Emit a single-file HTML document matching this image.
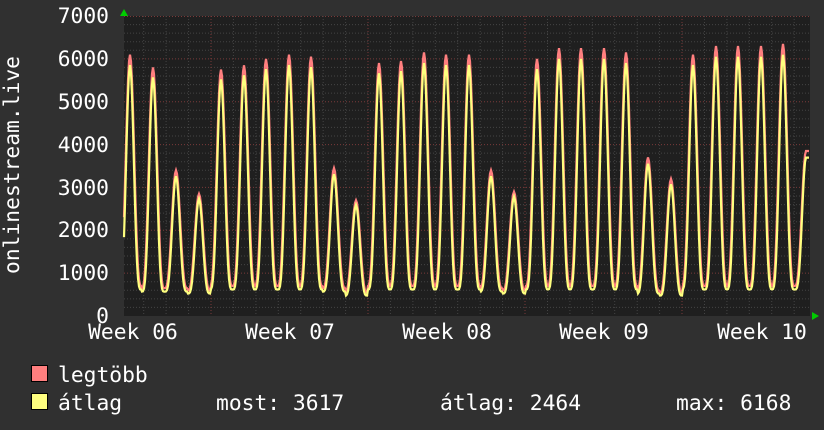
<!DOCTYPE html>
<html><head><meta charset="utf-8"><style>
html,body{margin:0;padding:0;background:#2f2f2f;}
svg{display:block}
text{font-family:"DejaVu Sans Mono","Liberation Mono",monospace;font-size:21.3px;fill:#fff}
</style></head><body>
<svg id="s" width="824" height="430" xmlns="http://www.w3.org/2000/svg">
<rect width="824" height="430" fill="#303030"/>
<rect x="124" y="16" width="686" height="300" fill="#1f1f1f"/>
<g id="grid"></g>
<path id="pmax" fill="none" stroke="#ff7f7f" stroke-width="2.2"/>
<path id="pavg" fill="none" stroke="#ffff7f" stroke-width="2.2"/>
<polygon points="120,16 128,16 124,9" fill="#00cc00"/>
<polygon points="812,312 812,320 819,316" fill="#00cc00"/>
<g text-anchor="end">
<text x="109" y="23">7000</text><text x="109" y="66">6000</text><text x="109" y="109">5000</text>
<text x="109" y="152">4000</text><text x="109" y="195">3000</text><text x="109" y="237">2000</text>
<text x="109" y="280">1000</text><text x="109" y="323">0</text>
</g>
<g text-anchor="middle">
<text x="133" y="339">Week 06</text><text x="290" y="339">Week 07</text><text x="447" y="339">Week 08</text>
<text x="604" y="339">Week 09</text><text x="762" y="339">Week 10</text>
</g>
<text transform="translate(19,165) rotate(-90)" text-anchor="middle">onlinestream.live</text>
<rect x="31.5" y="365.5" width="16" height="16" fill="#ff7f7f" stroke="#000"/>
<rect x="31.5" y="393.5" width="16" height="16" fill="#ffff7f" stroke="#000"/>
<text x="58" y="382">legtöbb</text>
<text x="58" y="410">átlag</text>
<text x="216" y="410">most: 3617</text>
<text x="440" y="410">átlag: 2464</text>
<text x="676" y="410">max: 6168</text>
</svg>
<script>
var g=document.getElementById('grid'),h='';
function Y(v){return 316-v*300/7000;}
for(var v=200;v<7000;v+=200){var y=Y(v).toFixed(1);var maj=v%1000==0;
h+='<line x1="124" x2="810" y1="'+y+'" y2="'+y+'" stroke="'+(maj?'#7a3a3a':'#444')+'" stroke-dasharray="1,2"/>';}
h+='<line x1="124" x2="810" y1="16.5" y2="16.5" stroke="#7a3a3a" stroke-dasharray="1,2"/>';
for(var x=211-22.43*3;x<810;x+=22.43){var maj=Math.abs(((x-211)/157)-Math.round((x-211)/157))<0.02;
h+='<line y1="16" y2="316" x1="'+x.toFixed(1)+'" x2="'+x.toFixed(1)+'" stroke="'+(maj?'#7a3a3a':'#444')+'" stroke-dasharray="1,2"/>';}
g.innerHTML=h;
var px=[130,153,176,199,221,244,266,289,311,334,356,379,401,424,446,469,491,514,537,559,581,604,626,648,671,693,716,738,761,783,806];
var pv=[6100,5800,3400,2850,5750,5850,6000,6100,6050,3450,2700,5900,5950,6150,6100,6100,3400,2900,6000,6250,6250,6250,6150,3700,3200,6100,6300,6300,6300,6350,3850];
var tr=[650,600,600,550,650,650,650,650,650,600,500,650,650,650,650,650,600,550,650,650,650,650,650,550,500,650,650,650,650,650,650];
function val(x,avg){
 var i=0;for(var k=0;k<px.length;k++){if(Math.abs(px[k]-x)<Math.abs(px[i]-x))i=k;}
 var d=(x-px[i])/22.43;var f=Math.pow((1+Math.cos(2*Math.PI*d))/2,avg?1.8:1.5);
 var p=pv[i]*(avg?0.96:1),t=tr[i]*(avg?0.95:1.08);
 if(i==30&&x>px[i])f=1;
 return t+(p-t)*f;}
var a='',b='';
for(var x=124;x<=809;x+=1){a+=(x==124?'M':'L')+x+','+Y(val(x,0)).toFixed(1);b+=(x==124?'M':'L')+x+','+Y(val(x,1)).toFixed(1);}
document.getElementById('pmax').setAttribute('d',a);
document.getElementById('pavg').setAttribute('d',b);
</script>
</body></html>
